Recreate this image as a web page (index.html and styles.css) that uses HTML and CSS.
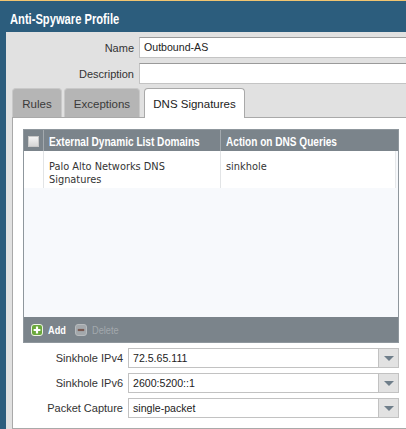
FILE: index.html
```html
<!DOCTYPE html>
<html>
<head>
<meta charset="utf-8">
<link rel="stylesheet" href="styles.css">
</head>
<body>
<div class="window">
  <header class="titlebar"><span class="narrow title-text">Anti-Spyware Profile</span></header>
  <main class="dialog">
    <div class="field-row">
      <span class="field-label">Name</span>
      <div class="text-input">Outbound-AS</div>
    </div>
    <div class="field-row">
      <span class="field-label">Description</span>
      <div class="text-input"></div>
    </div>
    <nav class="tabs">
      <div class="tab tab-rules">Rules</div>
      <div class="tab tab-exceptions">Exceptions</div>
      <div class="tab tab-active">DNS Signatures</div>
    </nav>
    <section class="panel">
      <div class="grid">
        <div class="grid-head">
          <div class="cell cell-check"><span class="checkbox"></span></div>
          <div class="cell cell-domain"><span class="narrow">External Dynamic List Domains</span></div>
          <div class="cell cell-action"><span class="narrow">Action on DNS Queries</span></div>
        </div>
        <div class="grid-body">
          <div class="grid-row">
            <div class="cell cell-check"></div>
            <div class="cell cell-domain">Palo Alto Networks DNS Signatures</div>
            <div class="cell cell-action">sinkhole</div>
          </div>
        </div>
        <div class="grid-toolbar">
          <span class="tool">
            <svg class="tool-icon" width="12" height="12" viewBox="0 0 12 12"><rect x="0.5" y="0.5" width="11" height="11" rx="2.5" fill="#6aa83c" stroke="#eef5e6"/><path d="M6 2.6v6.8M2.6 6h6.8" stroke="#fff" stroke-width="2.2"/></svg>
            <span class="tool-text narrow">Add</span>
          </span>
          <span class="tool tool-disabled">
            <svg class="tool-icon" width="12" height="12" viewBox="0 0 12 12"><rect x="0.5" y="0.5" width="11" height="11" rx="2.5" fill="#a3a8ac" stroke="#b7bbbe"/><path d="M2.8 6h6.4" stroke="#7a5a52" stroke-width="2.2"/></svg>
            <span class="tool-text narrow">Delete</span>
          </span>
        </div>
      </div>
      <div class="select-row">
        <span class="select-label">Sinkhole IPv4</span>
        <div class="select"><span class="select-value">72.5.65.111</span><span class="select-btn"><span class="caret"></span></span></div>
      </div>
      <div class="select-row">
        <span class="select-label">Sinkhole IPv6</span>
        <div class="select"><span class="select-value">2600:5200::1</span><span class="select-btn"><span class="caret"></span></span></div>
      </div>
      <div class="select-row">
        <span class="select-label">Packet Capture</span>
        <div class="select"><span class="select-value">single-packet</span><span class="select-btn"><span class="caret"></span></span></div>
      </div>
    </section>
  </main>
</div>
</body>
</html>
```
FILE: styles.css
```css
* { box-sizing: border-box; }
html, body {
  margin: 0;
  padding: 0;
  width: 406px;
  height: 429px;
  overflow: hidden;
  background: #2c5d7d;
  font-family: "Liberation Sans", Arial, sans-serif;
  color: #333;
}
.window {
  border-top: 1px solid #f0c470;
  display: flex;
  flex-direction: column;
}
.narrow {
  display: inline-block;
  white-space: nowrap;
  transform-origin: 0 50%;
}
.titlebar {
  height: 31px;
  padding: 6px 0 0 10px;
  line-height: 25px;
  color: #fff;
  font-weight: bold;
  font-size: 14.5px;
  white-space: nowrap;
}
.title-text { transform: scaleX(0.77); }
.dialog {
  margin-left: 6px;
  background: #e1e1e1;
  padding: 5px 0 0 6px;
  display: flex;
  flex-direction: column;
  width: 400px;
}
.field-row {
  display: flex;
  align-items: center;
  gap: 5px;
  height: 21px;
  margin-bottom: 5px;
}
.field-label {
  width: 122px;
  text-align: right;
  font-size: 11px;
  color: #333;
  padding-top: 1px;
}
.text-input {
  flex: 1;
  height: 21px;
  background: #fff;
  border: 1px solid #c4c4c4;
  border-right: none;
  border-top-color: #9a9a9a;
  padding: 0 0 0 4px;
  font-size: 10.6px;
  line-height: 19px;
  color: #222;
}
.tabs {
  display: flex;
  align-items: flex-end;
  margin-top: -1px;
  height: 29px;
  position: relative;
  z-index: 1;
}
.tab {
  height: 29px;
  border-radius: 4px 4px 0 0;
  background: #b5b5b5;
  border: 1px solid #c9c9c9;
  border-bottom: none;
  font-size: 11.5px;
  color: #3a3a3a;
  display: flex;
  align-items: center;
  justify-content: center;
  padding-top: 1px;
}
.tab-rules { width: 50px; margin-right: 2px; }
.tab-exceptions { width: 76px; margin-right: 4px; }
.tab-active {
  width: 101px;
  height: 30px;
  margin-bottom: -1px;
  background: #fff;
  border-color: #a9a9a9;
  color: #222;
}
.panel {
  background: #fff;
  border: 1px solid #a9a9a9;
  border-right: none;
  padding: 11px 0 10px 10px;
  display: flex;
  flex-direction: column;
  height: 312px;
}
.grid {
  width: 376px;
  border: 1px solid #8f979d;
  display: flex;
  flex-direction: column;
}
.grid-head {
  display: flex;
  height: 21px;
  background: #7b848b;
  color: #fff;
  font-weight: bold;
  font-size: 12px;
}
.grid-head .narrow { transform: scaleX(0.84); }
.grid-head .cell {
  display: flex;
  align-items: center;
  padding-top: 2px;
  border-right: 1px solid #a3a9ae;
  overflow: hidden;
}
.grid-head .cell-action { border-right: none; }
.grid-head .cell-check { padding-top: 1px; }
.cell-check { width: 20px; flex: none; justify-content: center; }
.cell-domain { width: 177px; flex: none; padding-left: 5px; }
.cell-action { flex: 1; padding-left: 5px; }
.checkbox {
  width: 11px;
  height: 11px;
  background: linear-gradient(#f4f4f4, #d6d6d6);
  border: 1px solid #c8c8c8;
}
.grid-body {
  height: 166px;
  background: #f7f9fc;
  padding-right: 2px;
}
.grid-row {
  display: flex;
  background: #fff;
  height: 37px;
  font-family: "DejaVu Sans", Verdana, sans-serif;
  font-size: 9.8px;
  color: #333;
  border-right: 1px solid #e6e8ea;
}
.grid-row .cell {
  padding-top: 9px;
  line-height: 13px;
  border-right: 1px solid #e2e4e6;
}
.grid-row .cell-action { border-right: none; }
.grid-row .cell-domain { padding-right: 20px; }
.grid-toolbar {
  height: 25px;
  background: #7b848b;
  display: flex;
  align-items: center;
  padding-left: 7px;
  gap: 11px;
  font-weight: bold;
  font-size: 11.5px;
  color: #fff;
}
.grid-toolbar .narrow { transform: scaleX(0.8); }
.tool { display: flex; align-items: center; gap: 5px; }
.tool-disabled { margin-left: -6px; }
.tool-icon { display: block; }
.tool-disabled .tool-text { color: #a2a8ad; font-weight: normal; }
.select-row {
  display: flex;
  align-items: center;
  gap: 5px;
  height: 20px;
  margin-top: 5px;
}
.select-label {
  width: 100px;
  text-align: right;
  font-size: 11px;
  color: #333;
  white-space: nowrap;
}
.select {
  width: 271px;
  height: 20px;
  display: flex;
  border: 1px solid #c2c2c2;
  background: #fff;
}
.select-value {
  flex: 1;
  padding-left: 4px;
  font-size: 10.6px;
  line-height: 18px;
  color: #222;
}
.select-btn {
  width: 20px;
  background: #e2e2e2;
  border-left: 1px solid #c2c2c2;
  display: flex;
  align-items: center;
  justify-content: center;
}
.caret {
  width: 0;
  height: 0;
  border-left: 5px solid transparent;
  border-right: 5px solid transparent;
  border-top: 5px solid #6f7e8a;
}
```
